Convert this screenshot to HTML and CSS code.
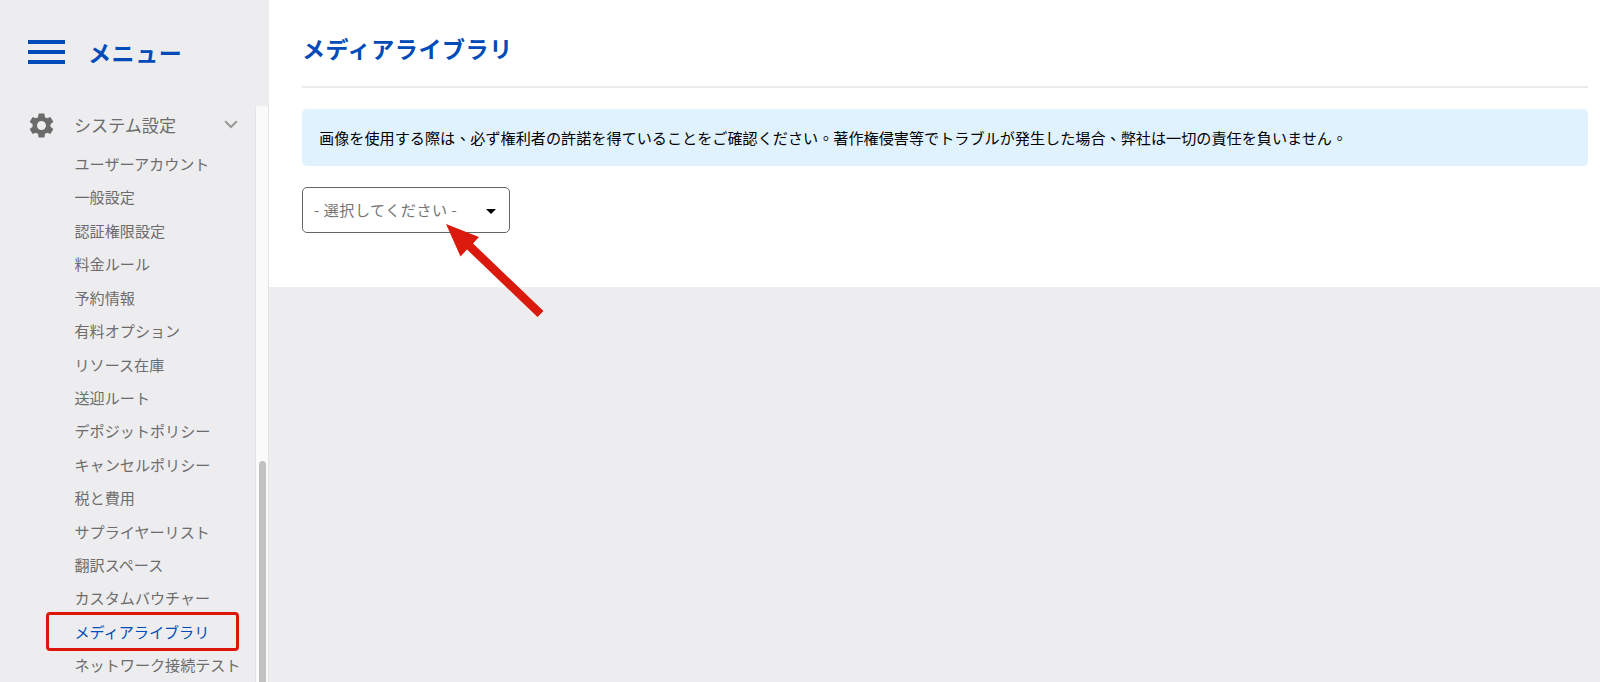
FILE: index.html
```
<!DOCTYPE html>
<html lang="ja">
<head>
  <meta charset="UTF-8" />
  <title>メディアライブラリ</title>
  <meta name="viewport" content="width=device-width, initial-scale=1.0"/>
  <link rel="stylesheet" href="styles.css">
</head>
<body>
<aside class="sidebar">
  <div class="sidebar-header">
    <div class="hamburger"><span></span><span></span><span></span></div>
    <h2>メニュー</h2>
  </div>

  <div class="sidebar-body">
    <nav>
      <div class="menu-group">
        <svg class="gear" viewBox="2 2 20 20"><path d="M19.14 12.94c.04-.3.06-.61.06-.94s-.02-.64-.07-.94l2.03-1.58a.49.49 0 0 0 .12-.61l-1.92-3.32a.49.49 0 0 0-.59-.22l-2.39.96a7 7 0 0 0-1.62-.94l-.36-2.54a.48.48 0 0 0-.48-.41h-3.84a.47.47 0 0 0-.47.41l-.36 2.54c-.59.24-1.13.57-1.62.94l-2.39-.96a.48.48 0 0 0-.59.22L2.74 8.87a.47.47 0 0 0 .12.61l2.03 1.58a6 6 0 0 0 0 1.88l-2.03 1.58a.49.49 0 0 0-.12.61l1.92 3.32c.12.22.37.29.59.22l2.39-.96c.5.38 1.03.7 1.62.94l.36 2.54c.05.24.24.41.48.41h3.84c.24 0 .44-.17.47-.41l.36-2.54a6.700 6.700 0 0 0 1.62-.94l2.39.96c.22.08.47 0 .59-.22l1.92-3.32a.47.47 0 0 0-.12-.61zM12 15.600a3.600 3.600 0 1 1 0-7.200 3.600 3.600 0 0 1 0 7.200z"/></svg>
        <span>システム設定</span>
        <svg class="chevron" viewBox="0 0 14 9"><path d="M1.200 1.200 7 7l5.800-5.800"/></svg>
      </div>
      <ul class="submenu">
        <li>ユーザーアカウント</li>
        <li>一般設定</li>
        <li>認証権限設定</li>
        <li>料金ルール</li>
        <li>予約情報</li>
        <li>有料オプション</li>
        <li>リソース在庫</li>
        <li>送迎ルート</li>
        <li>デポジットポリシー</li>
        <li>キャンセルポリシー</li>
        <li>税と費用</li>
        <li>サプライヤーリスト</li>
        <li>翻訳スペース</li>
        <li>カスタムバウチャー</li>
        <li class="active">メディアライブラリ</li>
        <li>ネットワーク接続テスト</li>
      </ul>
    </nav>
    <div class="scrollbar"><div class="thumb"></div></div>
  </div>
</aside>

<main>
  <section class="panel">
    <h1>メディアライブラリ</h1>
    <div class="notice" lang="zh-Hant">画像を使用する際は、必ず権利者の許諾を得ていることをご確認ください。著作権侵害等でトラブルが発生した場合、弊社は一切の責任を負いません。</div>
    <div class="select">
      <span>- 選択してください -</span>
      <i class="caret"></i>
      <svg class="arrow" viewBox="0 0 98 94"><path d="M0 0 33 13 27 19.500 97.500 87 91.500 93 21 25.500 14.500 32.500z"/></svg>
    </div>
  </section>
</main>
</body>
</html>
```
FILE: styles.css
```
* {
  box-sizing: border-box;
}

body {
  margin: 0;
  height: 682px;
  display: flex;
  overflow: hidden;
  background: #ededef;
  font-family: "Noto Sans CJK TC", "Noto Sans CJK JP", sans-serif;
  color: #000;
}

h1, h2 {
  margin: 0;
  color: #004bb8;
  font-weight: bold;
}

.sidebar {
  width: 269px;
  flex: none;
  display: flex;
  flex-direction: column;
}

.sidebar-header {
  height: 106px;
  flex: none;
  display: flex;
  align-items: center;
  padding: 0 0 2px 28px;
}

.hamburger {
  width: 37px;
  height: 24px;
  display: flex;
  flex-direction: column;
  justify-content: space-between;
  margin-right: 23px;
}

.hamburger span {
  height: 4px;
  background: #004bb8;
}

h2 {
  font-size: 23px;
  line-height: 34px;
  letter-spacing: 0.6px;
}

.sidebar-body {
  flex: 1;
  min-height: 0;
  display: flex;
}

nav {
  flex: 1;
  min-width: 0;
  overflow: hidden;
  color: #6c6c6c;
}

.menu-group {
  display: flex;
  align-items: center;
  height: 39px;
  padding: 0 17px 0 29px;
  font-size: 17.1px;
}

.menu-group span {
  flex: 1;
  margin-left: 20px;
  padding-bottom: 2px;
}

.gear {
  width: 25px;
  height: 25px;
  fill: #6b6b6b;
}

.chevron {
  width: 14px;
  height: 9px;
  margin-bottom: 2px;
  fill: none;
  stroke: #999;
  stroke-width: 2;
}

.submenu {
  list-style: none;
  margin: 2px 0 0;
  padding: 0;
  font-size: 15.1px;
}

.submenu li {
  height: 33.43px;
  line-height: 33.43px;
  padding-left: 74.5px;
  white-space: nowrap;
}

.submenu .active {
  color: #004bb8;
  margin-left: 49px;
  padding-left: 25.5px;
  width: 187px;
  outline: 3px solid #dc1608;
  border-radius: 1px;
}

.scrollbar {
  width: 14px;
  padding: 355px 2px 0 3px;
  background: #fafafa;
  border-left: 1px solid #e4e4e4;
  border-right: 1px solid #e4e4e4;
}

.thumb {
  height: 240px;
  border-radius: 4px;
  background: #c1c1c1;
}

main {
  flex: 1;
}

.panel {
  height: 287px;
  padding: 0 12px 0 33px;
  background: #fff;
}

h1 {
  height: 88px;
  padding-top: 31px;
  font-size: 23px;
  line-height: 34px;
  letter-spacing: 0.6px;
  border-bottom: 2px solid #ebebeb;
}

.notice {
  height: 57px;
  margin: 21px 0;
  padding-left: 17px;
  line-height: 57px;
  font-size: 15.14px;
  background: #e1f2ff;
  border-radius: 5px;
}

.select {
  position: relative;
  width: 208px;
  height: 46px;
  display: flex;
  align-items: center;
  justify-content: space-between;
  padding: 0 13px 0 11px;
  border: 1px solid #666;
  border-radius: 5px;
  font-size: 15.14px;
  color: #757575;
}

.select span {
  letter-spacing: 0.5px;
  padding-bottom: 2px;
}

.caret {
  margin-top: 2px;
  border: 5px solid transparent;
  border-top-color: #000;
  border-bottom: 0;
}

/* pointer drawn over the select */
.arrow {
  position: absolute;
  left: 143px;
  top: 36px;
  width: 98px;
  height: 94px;
  fill: #d91a0d;
}
```
